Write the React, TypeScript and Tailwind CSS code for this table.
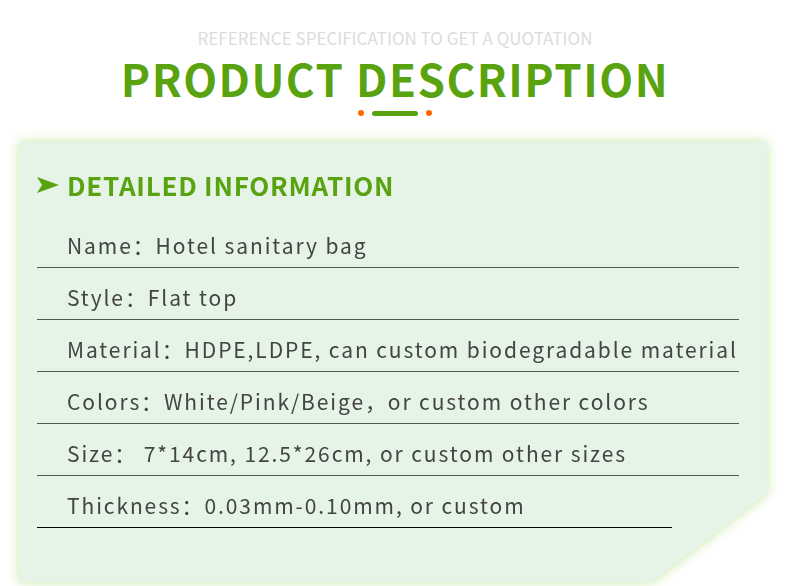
import React from 'react';

const rows = [
    { label: 'Name：', value: 'Hotel sanitary bag' },
    { label: 'Style：', value: 'Flat top' },
    { label: 'Material：', value: 'HDPE,LDPE, can custom biodegradable material' },
    { label: 'Colors：', value: 'White/Pink/Beige，or custom other colors' },
    { label: 'Size：', value: ' 7*14cm, 12.5*26cm, or custom other sizes' },
    { label: 'Thickness：', value: '0.03mm-0.10mm, or custom' },
];

export default function App() {
    return (
        <div className="w-[790px] h-[586px] bg-white overflow-hidden" style={{ fontFamily: '"Noto Sans CJK SC", "Noto Sans", sans-serif' }}>
            <div className="flex flex-col items-center pt-[27px]">
                <div className="text-[17px] leading-[22px] text-[#dcdcdc]">REFERENCE SPECIFICATION TO GET A QUOTATION</div>
                <h1 className="mt-[6px] text-[44px] leading-[46px] font-bold text-[#58a30f] tracking-[1.5px]">PRODUCT DESCRIPTION</h1>
                <div className="mt-[9px] flex items-center gap-[8px]">
                    <span className="w-[6px] h-[6px] rounded-full bg-[#ff6a00]" />
                    <span className="w-[46px] h-[5px] rounded-full bg-[#58a30f]" />
                    <span className="w-[6px] h-[6px] rounded-full bg-[#ff6a00]" />
                </div>
            </div>

            <div className="ml-[19px] mt-[26px] w-[748px] drop-shadow-[0_0_6px_rgba(150,210,80,0.55)]">
                <div className="h-[440px] bg-[#e5f4e6] pt-[25px] [clip-path:polygon(0_0,100%_0,100%_351px,633px_100%,0_100%)]">
                    <div className="flex items-center pl-[18px]">
                        <svg width="22" height="16" viewBox="0 0 22 16" className="mr-[8px]">
                            <path d="M0 0 L22 8 L0 16 L5 8 Z" fill="#58a30f" />
                        </svg>
                        <h2 className="text-[26px] leading-[36px] font-bold text-[#58a30f] tracking-[0.75px]">DETAILED INFORMATION</h2>
                    </div>
                    <div className="mt-[21px] pl-[18px]">
                        {rows.map((r, i) => (
                            <div
                                key={r.label}
                                className={`flex items-end pb-[8px] pl-[30px] border-b ${i === rows.length - 1 ? 'w-[635px] border-black' : 'w-[702px] border-[#555]'} ${i === 0 ? 'h-[44px]' : 'h-[52px]'}`}
                            >
                                <span className="text-[21px] leading-[28px] text-[#444] tracking-[1.9px] whitespace-pre">{r.label}{r.value}</span>
                            </div>
                        ))}
                    </div>
                </div>
            </div>
        </div>
    );
}
